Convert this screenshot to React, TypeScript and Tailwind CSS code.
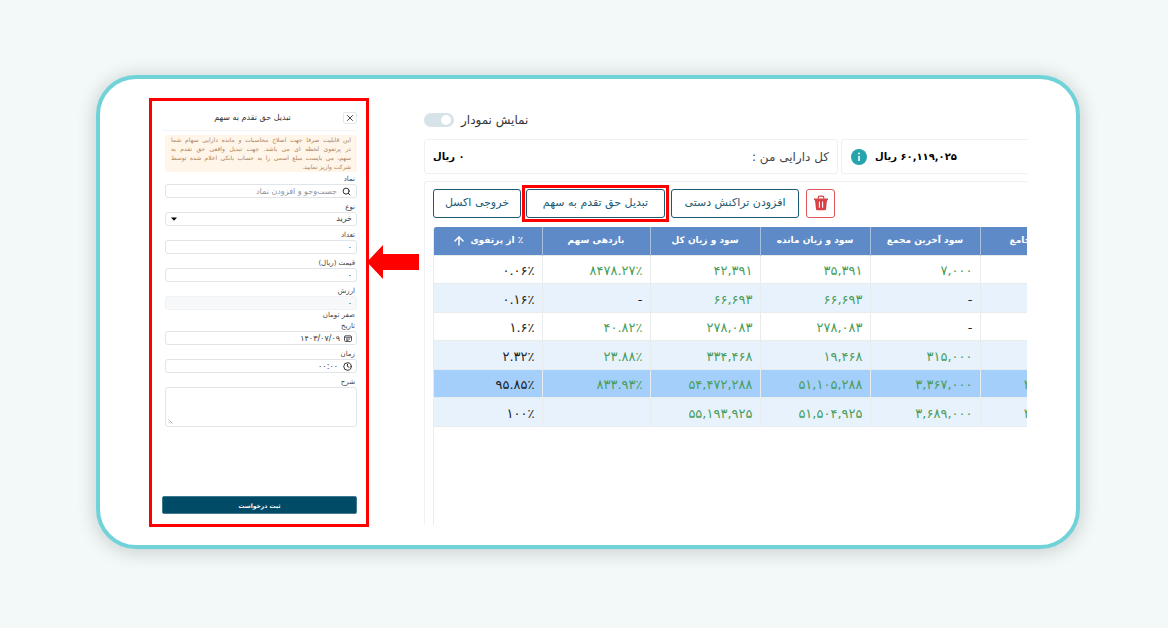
import { ArrowUp, Clock, Search, X } from "lucide-react"
import type { ReactNode } from "react"
import { useState } from "react"

type Row = {
	share: string
	yieldRate: string
	total: string
	remaining: string
	lastMeeting: string
	meetings: string
	selected?: boolean
}

const rows: Row[] = [
	{ share: "۰.۰۶٪", yieldRate: "۸۴۷۸.۲۷٪", total: "۴۲,۳۹۱", remaining: "۳۵,۳۹۱", lastMeeting: "۷,۰۰۰", meetings: "" },
	{ share: "۰.۱۶٪", yieldRate: "-", total: "۶۶,۶۹۳", remaining: "۶۶,۶۹۳", lastMeeting: "-", meetings: "" },
	{ share: "۱.۶٪", yieldRate: "۴۰.۸۲٪", total: "۲۷۸,۰۸۳", remaining: "۲۷۸,۰۸۳", lastMeeting: "-", meetings: "" },
	{ share: "۲.۳۲٪", yieldRate: "۲۳.۸۸٪", total: "۳۳۴,۴۶۸", remaining: "۱۹,۴۶۸", lastMeeting: "۳۱۵,۰۰۰", meetings: "" },
	{
		share: "۹۵.۸۵٪",
		yieldRate: "۸۳۳.۹۳٪",
		total: "۵۴,۴۷۲,۲۸۸",
		remaining: "۵۱,۱۰۵,۲۸۸",
		lastMeeting: "۳,۳۶۷,۰۰۰",
		meetings: "۳,۳۶۷,۰۰۰",
		selected: true,
	},
	{
		share: "۱۰۰٪",
		yieldRate: "",
		total: "۵۵,۱۹۳,۹۲۵",
		remaining: "۵۱,۵۰۴,۹۲۵",
		lastMeeting: "۳,۶۸۹,۰۰۰",
		meetings: "۳,۶۸۹,۰۰۰",
	},
]

const noticeLines = [
	"این قابلیت صرفا جهت اصلاح محاسبات و مانده دارایی سهام شما",
	"در پرتفوی لحظه ای می باشد. جهت تبدیل واقعی حق تقدم به",
	"سهم، می بایست مبلغ اسمی را به حساب بانکی اعلام شده توسط",
	"شرکت واریز نمایید.",
]

const boxClass = "flex h-[14px] w-full items-center rounded-[3px] border border-[#e1e4e8] bg-white px-1"
const inputClass = "h-full w-full min-w-0 bg-transparent text-[8px] text-[#333] outline-none placeholder:text-[#8d929b]"
const labelClass = "px-[2px] text-[7px] leading-[10px] text-[#444]"
const outlineButton =
	"h-[29px] cursor-pointer rounded-[3px] border border-[#1c5a73] bg-white text-[11px] whitespace-nowrap text-[#1c5a73]"

const Field = ({ id, label, children }: { id: string; label: string; children: ReactNode }) => (
	<div className="flex flex-col">
		<label htmlFor={id} className={labelClass}>
			{label}
		</label>
		{children}
	</div>
)

const CalendarIcon = () => (
	<svg viewBox="0 0 16 14" className="h-[7px] w-2 shrink-0" fill="none" stroke="#444" strokeWidth="1.8">
		<rect x="1" y="1.5" width="14" height="11.5" rx="2.5" />
		<path d="M1 4.5h14M4 8h8M4 10.5h5" />
	</svg>
)

const ConvertForm = () => {
	const [count, setCount] = useState("۰")
	const [price, setPrice] = useState("۰")

	return (
		<form
			dir="rtl"
			className="flex w-[220px] shrink-0 flex-col border-3 border-[#ff0000] bg-white pr-[9px] pb-[10px] pl-[10px]"
			onSubmit={(e) => e.preventDefault()}
		>
			<div className="flex h-[30px] items-center border-b border-[#f3f4f6] pt-1">
				<button
					type="button"
					aria-label="بستن"
					className="flex h-3 w-[14px] cursor-pointer items-center justify-center rounded-[2px] border border-[#e5e7eb]"
				>
					<X className="size-[10px] shrink-0 text-[#222]" />
				</button>
				<h2 className="flex-1 text-center text-[8px] text-[#333]">تبدیل حق تقدم به سهم</h2>
			</div>
			<div className="pl-[3px]">
				<p className="mt-1 mb-[2px] h-[37px] rounded-[2px] bg-[#fff5e8] px-[6px] text-[6px] leading-[9px] text-[#b1835b]">
					{noticeLines.map((line) => (
						<span key={line} className="block text-justify whitespace-nowrap not-last:[text-align-last:justify]">
							{line}
						</span>
					))}
				</p>
				<div className="flex flex-col gap-1">
					<Field id="symbol" label="نماد">
						<div className={`${boxClass} gap-[5px]`}>
							<Search className="mr-px size-[9px] shrink-0 text-[#222]" strokeWidth={2.5} />
							<input id="symbol" className={inputClass} placeholder="جست‌وجو و افزودن نماد" />
						</div>
					</Field>
					<Field id="kind" label="نوع">
						<div className={`${boxClass} gap-1`}>
							<select id="kind" className={`${inputClass} appearance-none`}>
								<option>خرید</option>
								<option>فروش</option>
							</select>
							<svg viewBox="0 0 6 4" className="ml-px h-1 w-[6px] shrink-0">
								<path d="M0 0.5h6L3 3.8z" fill="#000" />
							</svg>
						</div>
					</Field>
					<Field id="count" label="تعداد">
						<div className={boxClass}>
							<input id="count" className={inputClass} value={count} onChange={(e) => setCount(e.target.value)} />
						</div>
					</Field>
					<Field id="price" label="قیمت (ریال)">
						<div className={boxClass}>
							<input id="price" className={inputClass} value={price} onChange={(e) => setPrice(e.target.value)} />
						</div>
					</Field>
					<Field id="value" label="ارزش">
						<div className="flex h-[14px] w-full items-center rounded-[3px] border border-[#f1f2f4] bg-[#f7f8f9] px-1">
							<input id="value" className={inputClass} value="۰" readOnly />
						</div>
					</Field>
				</div>
				<p className={`${labelClass} mb-px`}>صفر تومان</p>
				<div className="flex flex-col gap-1">
					<Field id="date" label="تاریخ">
						<div className={`${boxClass} gap-1`}>
							<CalendarIcon />
							<input id="date" className={inputClass} defaultValue="۱۴۰۳/۰۷/۰۹" />
						</div>
					</Field>
					<Field id="time" label="زمان">
						<div className={`${boxClass} gap-[5px]`}>
							<Clock className="size-[9px] shrink-0 text-[#222]" strokeWidth={2.5} />
							<input id="time" className={inputClass} defaultValue="۰۰:۰۰" />
						</div>
					</Field>
					<Field id="note" label="شرح">
						<div className="relative flex h-10 rounded-[3px] border border-[#e1e4e8]">
							<textarea id="note" className="w-full resize-none px-1 text-[8px] outline-none" />
							<svg
								viewBox="0 0 6 6"
								className="absolute bottom-[2px] left-[2px] size-[5px]"
								stroke="#888"
								strokeWidth="0.7"
							>
								<path d="M0.5 0.5l5 5M0.5 3.2l2.3 2.3" />
							</svg>
						</div>
					</Field>
				</div>
			</div>
			<button
				type="submit"
				className="mt-auto h-[18px] cursor-pointer rounded-[2px] border border-[#3d7a92] bg-[#024b66] text-[6px] font-bold text-white"
			>
				ثبت درخواست
			</button>
		</form>
	)
}

const Arrow = () => (
	<svg viewBox="0 0 52 34" className="z-10 mt-[147px] mr-[5px] -ml-[2px] h-[34px] w-[52px] shrink-0" fill="#ff0000">
		<path d="M0 17L16 0v9h36v16H16v9z" />
	</svg>
)

const TrashIcon = () => (
	<svg viewBox="0 0 16 16" className="size-4" fill="none">
		<path d="M5.3 3.6V2.6c0-.9.6-1.4 1.4-1.4h2.6c.8 0 1.4.5 1.4 1.4v1" stroke="#d94045" strokeWidth="1.3" />
		<path d="M1 3.4h14v1.8h-1L13 14c-.1.8-.6 1.3-1.4 1.3H4.4c-.8 0-1.3-.5-1.4-1.3L2 5.2H1z" fill="#d94045" />
		<path d="M6.4 6.5v6.2M9.6 6.5v6.2" stroke="#fff" strokeWidth="1.1" />
	</svg>
)

const InfoIcon = () => (
	<svg viewBox="0 0 16 16" className="size-4">
		<circle cx="8" cy="8" r="8" fill="#26a4ae" />
		<circle cx="8" cy="4.6" r="1" fill="#fff" />
		<path d="M8 7v5" stroke="#fff" strokeWidth="1.6" />
	</svg>
)

const headCell = "border-l border-[#a9bfdf] px-2 text-center font-bold whitespace-nowrap"

const Value = ({ children }: { children: string }) => (
	<td
		className={`border-t border-l border-[#e9eced] px-[7px] pt-1 text-right leading-4 ${children === "-" ? "text-[#222]" : "text-[#4a9d5b]"}`}
	>
		{children}
	</td>
)

const PortfolioTable = () => (
	<table dir="rtl" className="w-[654px] shrink-0 table-fixed text-[13px]">
		<colgroup>
			<col className="w-[108px]" />
			<col className="w-[110px]" />
			<col className="w-[110px]" />
			<col className="w-[110px]" />
			<col className="w-[108px]" />
			<col className="w-[108px]" />
		</colgroup>
		<thead>
			<tr className="h-[28px] bg-[#5f8ac8] text-[9px] text-white">
				<th className={headCell}>سود مجامع</th>
				<th className={headCell}>سود آخرین مجمع</th>
				<th className={headCell}>سود و زیان مانده</th>
				<th className={headCell}>سود و زیان کل</th>
				<th className={headCell}>بازدهی سهم</th>
				<th className="px-2 font-bold whitespace-nowrap">
					<span className="flex items-center justify-center gap-1">
						٪ از پرتفوی
						<ArrowUp className="size-[14px]" strokeWidth={2.5} />
					</span>
				</th>
			</tr>
		</thead>
		<tbody>
			{rows.map((row, i) => (
				<tr
					key={row.share}
					className={`odd:h-[28px] even:h-[29px] ${row.selected ? "bg-[#a3cffa]" : i % 2 === 1 ? "bg-[#e8f2fd]" : "bg-white"}`}
				>
					<Value>{row.meetings}</Value>
					<Value>{row.lastMeeting}</Value>
					<Value>{row.remaining}</Value>
					<Value>{row.total}</Value>
					<Value>{row.yieldRate}</Value>
					<td className="border-t border-[#e9eced] px-[7px] pt-1 text-right leading-4 text-[#222]">{row.share}</td>
				</tr>
			))}
		</tbody>
		<tfoot>
			<tr>
				<td colSpan={6} className="border-t border-[#e9eced]" />
			</tr>
		</tfoot>
	</table>
)

const Portfolio = () => (
	<section className="flex min-w-0 flex-1 flex-col overflow-hidden pt-3 pb-[2px]">
		<div className="flex h-5 items-center gap-[7px]">
			<input
				id="chart"
				type="checkbox"
				defaultChecked
				className="flex h-[14px] w-[30px] cursor-pointer appearance-none items-center rounded-full bg-[#d6e3e8] px-[3px] before:size-[10px] before:rounded-full before:bg-white checked:justify-end"
			/>
			<label htmlFor="chart" className="text-xs text-[#333]">
				نمایش نمودار
			</label>
		</div>
		<div className="mt-[9px] flex h-[35px] gap-[3px]">
			<div className="flex w-[414px] items-center justify-between rounded-[3px] border border-[#eef0f1] px-2" dir="rtl">
				<span className="text-xs text-[#444]">کل دارایی من :</span>
				<b className="text-[10px] text-black">۰ ریال</b>
			</div>
			<div className="flex flex-1 items-center gap-2 rounded-l-[3px] border border-r-0 border-[#eef0f1] px-[9px]">
				<InfoIcon />
				<b dir="rtl" className="text-[10px] text-black">
					۶۰,۱۱۹,۰۲۵ ریال
				</b>
			</div>
		</div>
		<div className="mt-[7px] flex flex-1 flex-col rounded-tl-[3px] border-t border-l border-[#eef0f1] pl-2">
			<div className="flex h-[45px] items-center pb-[3px]">
				<button type="button" className={`${outlineButton} w-[88px]`}>
					خروجی اکسل
				</button>
				<div className="ml-px border-3 border-[#ff0000] p-px">
					<button type="button" className={`${outlineButton} block w-[139px]`}>
						تبدیل حق تقدم به سهم
					</button>
				</div>
				<button type="button" className={`${outlineButton} ml-[2px] w-[128px]`}>
					افزودن تراکنش دستی
				</button>
				<button
					type="button"
					aria-label="حذف"
					className="ml-[7px] flex size-[29px] cursor-pointer items-center justify-center rounded-[3px] border border-[#e0575b]"
				>
					<TrashIcon />
				</button>
			</div>
			<div className="flex flex-1 items-start overflow-hidden rounded-tl-[3px] border-l border-[#e9eced]">
				<PortfolioTable />
			</div>
		</div>
	</section>
)

const App = () => {
	return (
		<div className="min-h-screen bg-[#f3f9f9] pt-[75px] pr-[88px] pb-10 pl-24 font-['DejaVu_Sans',sans-serif]">
			<main className="flex min-h-[474px] rounded-[40px] border-4 border-[#70d3d9] bg-white pt-[19px] pr-[49px] pb-[18px] pl-[49px] shadow-[0_2px_20px_rgba(0,0,0,0.2)]">
				<ConvertForm />
				<Arrow />
				<Portfolio />
			</main>
		</div>
	)
}

export default App
